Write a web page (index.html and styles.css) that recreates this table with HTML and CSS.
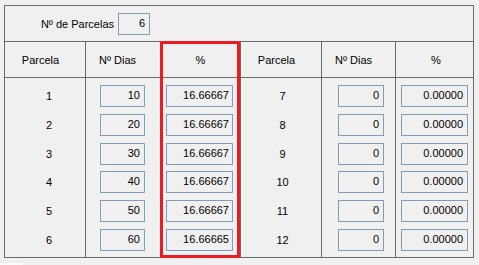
FILE: index.html
```html
<!DOCTYPE html>
<html>
<head>
<meta charset="utf-8">
<link rel="stylesheet" href="styles.css">
</head>
<body>
<div class="frame">
  <div class="top">
    <span class="top-label">Nº de Parcelas</span>
    <span class="field f-count">6</span>
  </div>
  <div class="grid">
    <div class="hcell h1">Parcela</div>
    <div class="hcell h2">Nº Dias</div>
    <div class="hcell h3">%</div>
    <div class="hcell h4">Parcela</div>
    <div class="hcell h5">Nº Dias</div>
    <div class="hcell h6">%</div>

    <div class="col c1">
      <div class="num">1</div><div class="num">2</div><div class="num">3</div>
      <div class="num">4</div><div class="num">5</div><div class="num">6</div>
    </div>
    <div class="col c2">
      <div class="field">10</div><div class="field">20</div><div class="field">30</div>
      <div class="field">40</div><div class="field">50</div><div class="field">60</div>
    </div>
    <div class="col c3">
      <div class="field">16.66667</div><div class="field">16.66667</div><div class="field">16.66667</div>
      <div class="field">16.66667</div><div class="field">16.66667</div><div class="field">16.66665</div>
    </div>
    <div class="col c4">
      <div class="num">7</div><div class="num">8</div><div class="num">9</div>
      <div class="num">10</div><div class="num">11</div><div class="num">12</div>
    </div>
    <div class="col c5">
      <div class="field">0</div><div class="field">0</div><div class="field">0</div>
      <div class="field">0</div><div class="field">0</div><div class="field">0</div>
    </div>
    <div class="col c6">
      <div class="field">0.00000</div><div class="field">0.00000</div><div class="field">0.00000</div>
      <div class="field">0.00000</div><div class="field">0.00000</div><div class="field">0.00000</div>
    </div>

    <div class="highlight"></div>
  </div>
</div>
<div class="strip"></div>
</body>
</html>
```

FILE: styles.css
```css
html, body {
  margin: 0;
  padding: 0;
  background: #f0f0f0;
}

body {
  font-family: "Liberation Sans", Arial, sans-serif;
  font-size: 11px;
  color: #000;
  width: 479px;
  height: 265px;
  overflow: hidden;
}

.frame {
  margin: 5px 0 0 4px;
  width: 468px;
  border: 1px solid #6a6a6a;
}

.top {
  height: 35px;
  border-bottom: 1px solid #6a6a6a;
  display: flex;
  align-items: flex-start;
}

.top-label {
  width: 109px;
  margin-top: 7px;
  text-align: right;
  line-height: 22px;
}

.field {
  box-sizing: border-box;
  height: 22px;
  border: 1px solid #7f9db9;
  background: #f0f0f0;
  line-height: 18px;
  padding: 0 4px 2px 0;
  text-align: right;
  white-space: nowrap;
}

.f-count {
  display: block;
  width: 32px;
  margin: 7px 0 0 4px;
}

.grid {
  position: relative;
  display: grid;
  grid-template-columns: 80px 74px 79px 80px 73px 77px;
  grid-template-rows: 35px 179px;
  gap: 1px;
  background: #6a6a6a;
}

.hcell {
  background: #f0f0f0;
  display: flex;
  align-items: center;
  justify-content: center;
  padding-top: 1px;
  box-sizing: border-box;
}

.h1 { padding-right: 9px; }
.h2 { padding-right: 11px; }
.h4 { padding-right: 9px; }
.h5 { padding-right: 10px; }
.h6 { padding-left: 3px; }

.col {
  background: #f0f0f0;
  display: flex;
  flex-direction: column;
  padding-top: 7px;
  gap: 6.8px;
  box-sizing: border-box;
}

.num {
  height: 22px;
  line-height: 22px;
  text-align: center;
}

.c1 .num { padding-left: 8px; }
.c4 .num { padding-left: 3px; }

.c2 .field { width: 45px; margin-left: 14px; }
.c3 .field { width: 67px; margin-left: 5px; padding-right: 3px; }
.c5 .field { width: 46px; margin-left: 16px; }
.c6 .field { width: 67px; margin-left: 5px; }

.highlight {
  position: absolute;
  left: 155px;
  top: -1px;
  bottom: -1px;
  width: 80px;
  box-sizing: border-box;
  border: 3px solid #ec1c24;
  pointer-events: none;
}

.strip {
  margin-top: 5px;
  width: 23px;
  height: 2px;
  background: #fbfbfb;
}
```
